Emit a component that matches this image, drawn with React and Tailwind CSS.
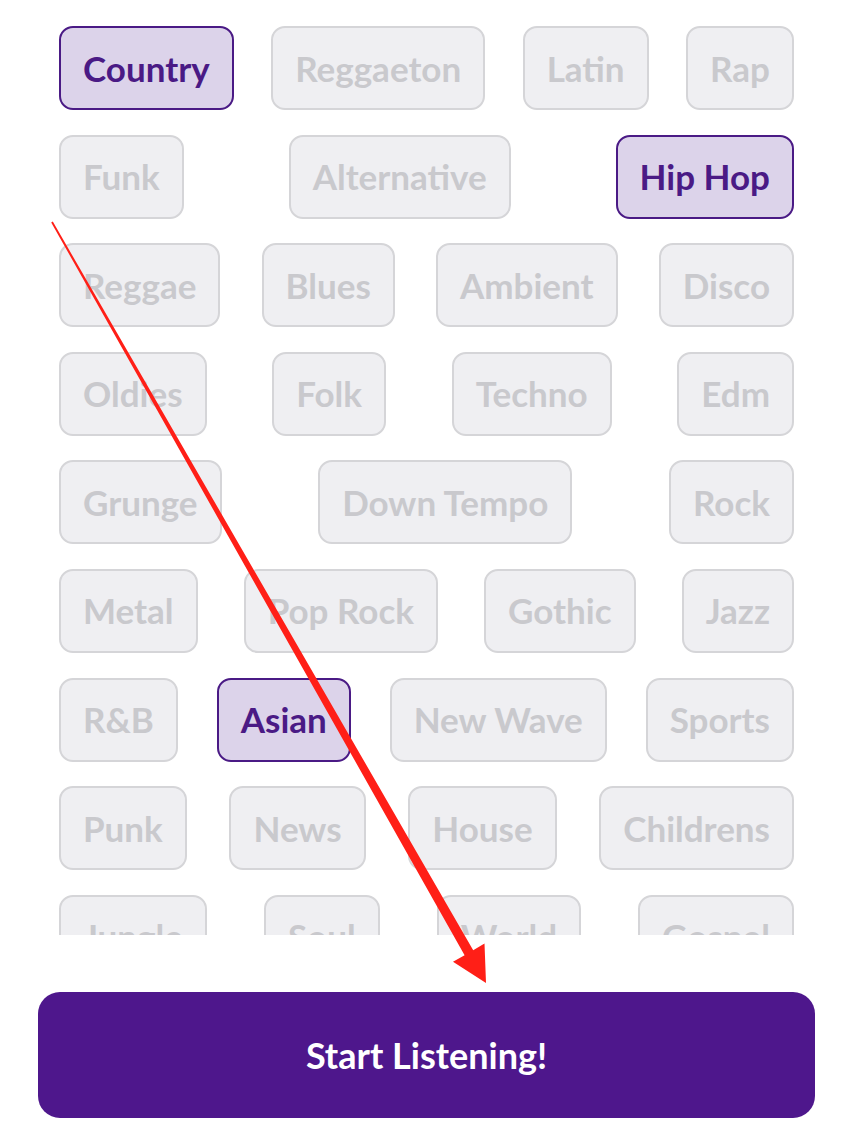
import React, { useState } from 'react';

const ROWS = [
  ['Country', 'Reggaeton', 'Latin', 'Rap'],
  ['Funk', 'Alternative', 'Hip Hop'],
  ['Reggae', 'Blues', 'Ambient', 'Disco'],
  ['Oldies', 'Folk', 'Techno', 'Edm'],
  ['Grunge', 'Down Tempo', 'Rock'],
  ['Metal', 'Pop Rock', 'Gothic', 'Jazz'],
  ['R&B', 'Asian', 'New Wave', 'Sports'],
  ['Punk', 'News', 'House', 'Childrens'],
  ['Jungle', 'Soul', 'World', 'Gospel'],
];

const Chip = ({ label, selected, onClick }) => (
  <button
    onClick={onClick}
    className={
      selected
        ? 'h-[84px] px-[22px] rounded-[14px] border-2 border-[#4a1a85] bg-[#dcd3ea] text-[#4a1a85] text-[35px] font-bold leading-none'
        : 'h-[84px] px-[22px] rounded-[14px] border-2 border-[#d5d5d8] bg-[#efeff2] text-[#c9c9cd] text-[35px] font-bold leading-none'
    }
  >
    {label}
  </button>
);

const App = () => {
  const [selected, setSelected] = useState(['Country', 'Hip Hop', 'Asian']);

  const toggle = (g) =>
    setSelected((s) => (s.includes(g) ? s.filter((x) => x !== g) : [...s, g]));

  return (
    <div className="relative w-[850px] h-[1148px] bg-white overflow-hidden font-['Lato','Noto_Sans',sans-serif]">
      <div className="h-[935px] overflow-hidden pl-[59px] pr-[56px] pt-[26px]">
        <div className="flex flex-col gap-y-[24.6px]">
          {ROWS.map((row, i) => (
            <div key={i} className="flex justify-between">
              {row.map((g) => (
                <Chip key={g} label={g} selected={selected.includes(g)} onClick={() => toggle(g)} />
              ))}
            </div>
          ))}
        </div>
      </div>

      <div className="mt-[57px] ml-[38px] mr-[35px]">
        <button className="w-full h-[126px] rounded-[22px] bg-[#4e178c] text-white text-[36px] font-bold">
          Start Listening!
        </button>
      </div>

      {/* annotation arrow */}
      <svg className="absolute inset-0 pointer-events-none" width="850" height="1148" viewBox="0 0 850 1148">
        <polygon
          fill="#ff1f17"
          points="52.8,221.6 473.2,950.2 484.5,943.5 486,983 453,961.8 464.6,955.2 51.2,222.4"
        />
      </svg>
    </div>
  );
};

export default App;
